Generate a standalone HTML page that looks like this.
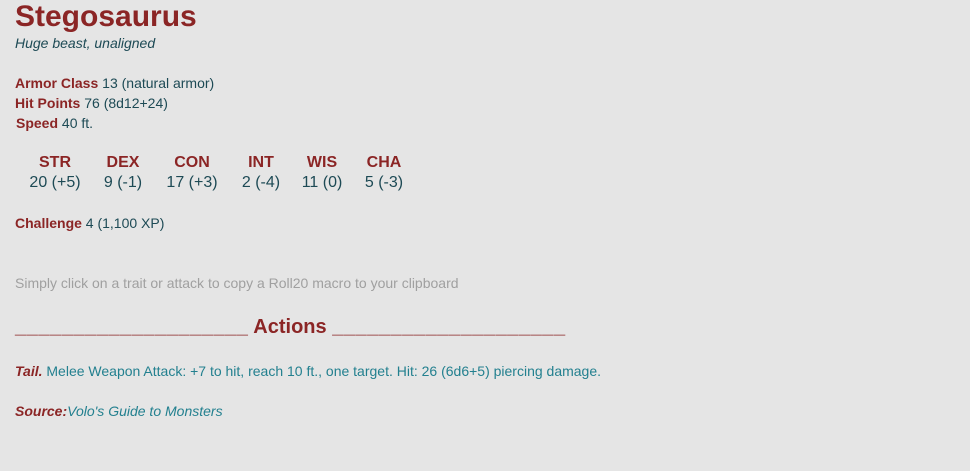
<!DOCTYPE html>
<html><head><style>
body{margin:0;width:970px;height:471px;background:#e5e5e5;font-family:"Liberation Sans",sans-serif;position:relative;overflow:hidden}
.a{position:absolute;white-space:nowrap;line-height:1}
.r{color:#8b2525;font-weight:bold}
.t{color:#1d4a55}
.c{color:#23808f}
.st{position:absolute;text-align:center;width:60px;font-size:16px;line-height:20px}
.u{letter-spacing:0.55px}
</style></head><body>
<div class="a r" style="left:15px;top:2px;font-size:30px">Stegosaurus</div>
<div class="a t" style="left:15px;top:36px;font-size:14px;font-style:italic">Huge beast, unaligned</div>
<div class="a t" style="left:15px;top:76px;font-size:14px"><span class="r">Armor Class</span> 13 (natural armor)</div>
<div class="a t" style="left:15px;top:96px;font-size:14px"><span class="r">Hit Points</span> 76 (8d12+24)</div>
<div class="a t" style="left:16px;top:116px;font-size:14px"><span class="r">Speed</span> 40 ft.</div>
<div class="st" style="left:25px;top:153px"><div class="r">STR</div><div class="t">20 (+5)</div></div>
<div class="st" style="left:93px;top:153px"><div class="r">DEX</div><div class="t">9 (-1)</div></div>
<div class="st" style="left:162px;top:153px"><div class="r">CON</div><div class="t">17 (+3)</div></div>
<div class="st" style="left:231px;top:153px"><div class="r">INT</div><div class="t">2 (-4)</div></div>
<div class="st" style="left:292px;top:153px"><div class="r">WIS</div><div class="t">11 (0)</div></div>
<div class="st" style="left:354px;top:153px"><div class="r">CHA</div><div class="t">5 (-3)</div></div>
<div class="a t" style="left:15px;top:216px;font-size:14px"><span class="r">Challenge</span> 4 (1,100 XP)</div>
<div class="a" style="left:15px;top:276px;font-size:14px;color:#a0a0a0">Simply click on a trait or attack to copy a Roll20 macro to your clipboard</div>
<div class="a r" style="left:15px;top:317px;font-size:20px"><span class="u">____________________</span> Actions <span class="u">____________________</span></div>
<div class="a c" style="left:15px;top:364px;font-size:14px"><span class="r" style="font-style:italic">Tail.</span> Melee Weapon Attack: +7 to hit, reach 10 ft., one target. Hit: 26 (6d6+5) piercing damage.</div>
<div class="a c" style="left:15px;top:404px;font-size:14px;font-style:italic"><span class="r">Source:</span>Volo's Guide to Monsters</div>
</body></html>
